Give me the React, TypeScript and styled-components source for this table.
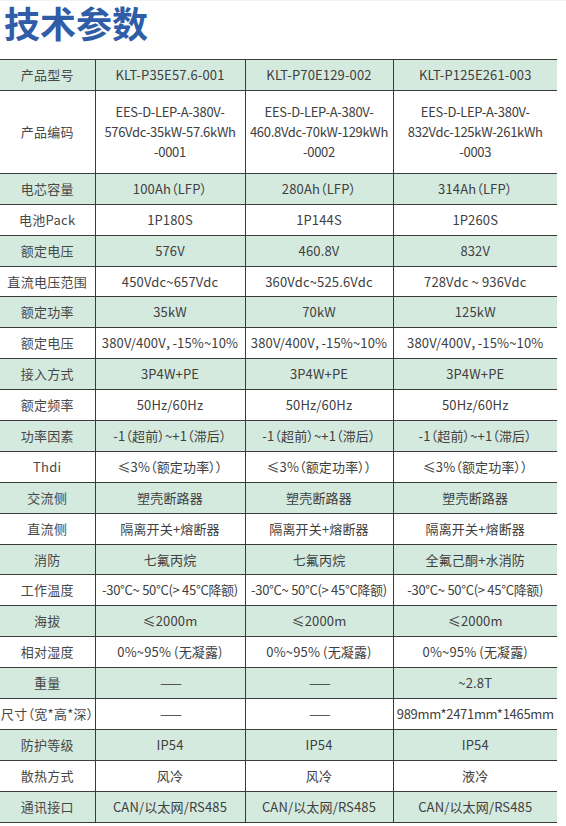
import React from 'react'
import styled, { createGlobalStyle } from 'styled-components'

type Spec = {
  label: string
  values: [string, string, string]
}

const columnWidths = [95, 150, 148, 164]

const specs: Spec[] = [
  { label: '产品型号', values: ['KLT-P35E57.6-001', 'KLT-P70E129-002', 'KLT-P125E261-003'] },
  {
    label: '产品编码',
    values: [
      'EES-D-LEP-A-380V-\n576Vdc-35kW-57.6kWh\n-0001',
      'EES-D-LEP-A-380V-\n460.8Vdc-70kW-129kWh\n-0002',
      'EES-D-LEP-A-380V-\n832Vdc-125kW-261kWh\n-0003',
    ],
  },
  { label: '电芯容量', values: ['100Ah（LFP）', '280Ah（LFP）', '314Ah（LFP）'] },
  { label: '电池Pack', values: ['1P180S', '1P144S', '1P260S'] },
  { label: '额定电压', values: ['576V', '460.8V', '832V'] },
  { label: '直流电压范围', values: ['450Vdc~657Vdc', '360Vdc~525.6Vdc', '728Vdc ~ 936Vdc'] },
  { label: '额定功率', values: ['35kW', '70kW', '125kW'] },
  { label: '额定电压', values: ['380V/400V，-15%~10%', '380V/400V，-15%~10%', '380V/400V，-15%~10%'] },
  { label: '接入方式', values: ['3P4W+PE', '3P4W+PE', '3P4W+PE'] },
  { label: '额定频率', values: ['50Hz/60Hz', '50Hz/60Hz', '50Hz/60Hz'] },
  { label: '功率因素', values: ['-1（超前）~+1（滞后）', '-1（超前）~+1（滞后）', '-1（超前）~+1（滞后）'] },
  { label: 'Thdi', values: ['≤3%（额定功率））', '≤3%（额定功率））', '≤3%（额定功率））'] },
  { label: '交流侧', values: ['塑壳断路器', '塑壳断路器', '塑壳断路器'] },
  { label: '直流侧', values: ['隔离开关+熔断器', '隔离开关+熔断器', '隔离开关+熔断器'] },
  { label: '消防', values: ['七氟丙烷', '七氟丙烷', '全氟己酮+水消防'] },
  { label: '工作温度', values: ['-30°C~ 50°C(> 45°C降额)', '-30°C~ 50°C(> 45°C降额)', '-30°C~ 50°C(> 45°C降额)'] },
  { label: '海拔', values: ['≤2000m', '≤2000m', '≤2000m'] },
  { label: '相对湿度', values: ['0%~95% (无凝露)', '0%~95% (无凝露)', '0%~95% (无凝露)'] },
  { label: '重量', values: ['——', '——', '~2.8T'] },
  { label: '尺寸（宽*高*深）', values: ['——', '——', '989mm*2471mm*1465mm'] },
  { label: '防护等级', values: ['IP54', 'IP54', 'IP54'] },
  { label: '散热方式', values: ['风冷', '风冷', '液冷'] },
  { label: '通讯接口', values: ['CAN/以太网/RS485', 'CAN/以太网/RS485', 'CAN/以太网/RS485'] },
]

const GlobalStyle = createGlobalStyle`
  html, body {
    margin: 0;
    padding: 0;
    background: #ffffff;
  }

  body {
    font-family: 'Noto Sans CJK SC', 'Noto Sans', sans-serif;
    color: #404040;
  }
`

const App: React.FC = () => (
  <>
    <GlobalStyle />
    <Page>
      <Title>技术参数</Title>
      <SpecTable>
        <colgroup>
          {columnWidths.map((w, i) => (
            <Col key={i} $w={w} />
          ))}
        </colgroup>
        <tbody>
          {specs.map((row, i) => {
            const tall = row.values.some((v) => v.includes('\n'))
            return (
              <Row key={row.label + i} $shaded={i % 2 === 0}>
                <LabelCell $tall={tall}>{row.label}</LabelCell>
                {row.values.map((v, j) => (
                  <ValueCell key={j} $tall={tall} $tight={v.length > 18}>
                    {v === '——' ? <Dash>——</Dash> : v}
                  </ValueCell>
                ))}
              </Row>
            )
          })}
        </tbody>
      </SpecTable>
    </Page>
  </>
)

const Page = styled.div`
  width: 566px;
  padding-top: 1px;
  border-top: 1px solid #f2f2f2;
`

const Title = styled.h1`
  margin: 0 0 16px;
  padding-left: 4px;
  font-size: 36px;
  line-height: 41px;
  font-weight: 700;
  color: #2f5da8;
`

const SpecTable = styled.table`
  width: 557px;
  table-layout: fixed;
  border-collapse: collapse;
  font-size: 13px;
  line-height: 20px;
  font-feature-settings: 'palt';
`

const Col = styled.col<{ $w: number }>`
  width: ${(p) => p.$w}px;
`

const Row = styled.tr<{ $shaded: boolean }>`
  background: ${(p) => (p.$shaded ? '#d5eadf' : '#ffffff')};
`

const Cell = styled.td<{ $tall: boolean }>`
  padding: ${(p) => (p.$tall ? '11px 0' : '5px 0 4.9px')};
  text-align: center;
  vertical-align: middle;
  border-top: 1px solid #3a3a3a;
  border-bottom: 1px solid #3a3a3a;
  border-left: 1px solid #3a3a3a;

  &:first-child {
    border-left: none;
  }
`

const LabelCell = styled(Cell)`
  color: #484848;
  white-space: nowrap;
  letter-spacing: 0.3px;
`

const ValueCell = styled(Cell)<{ $tight?: boolean }>`
  letter-spacing: ${(p) => (p.$tight ? '-0.3px' : '0.15px')};
  white-space: pre;
`

const Dash = styled.span`
  letter-spacing: -2px;
  color: #333333;
`

export default App
